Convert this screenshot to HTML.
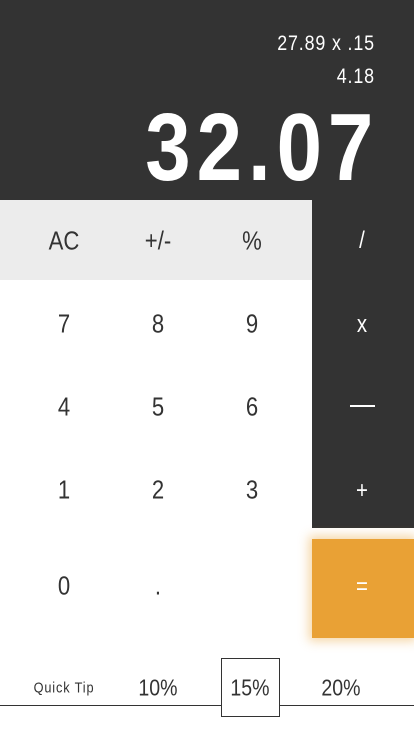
<!DOCTYPE html>
<html><head><meta charset="utf-8"><style>
*{margin:0;padding:0;box-sizing:border-box}
body{width:414px;height:736px;background:#fff;font-family:"Liberation Sans",sans-serif;position:relative;overflow:hidden;color:#333}
.a{position:absolute}
.c{position:absolute;transform:translate(-50%,-50%) scaleX(0.85);white-space:nowrap}
.r{position:absolute;transform-origin:right center;color:#fff;white-space:nowrap}
</style></head><body>
<div class="a" style="left:0;top:0;width:414px;height:200px;background:#333"></div>
<div class="r" style="top:31px;font-size:21px;line-height:26px;right:39px;letter-spacing:1px;transform:scaleX(0.85)">27.89 x .15</div>
<div class="r" style="top:64px;font-size:21px;line-height:26px;right:39px;letter-spacing:1px;transform:scaleX(0.85)">4.18</div>
<div class="r" style="top:99px;font-size:96px;line-height:98px;font-weight:bold;letter-spacing:7px;right:35px;transform:scaleX(0.85)">32.07</div>
<div class="a" style="left:0;top:200px;width:312px;height:80px;background:#ececec"></div>
<div class="a" style="left:312px;top:200px;width:102px;height:328px;background:#333"></div>
<div class="a" style="left:312px;top:539px;width:102px;height:99px;background:#e9a135;box-shadow:0 0 10px 3px rgba(233,161,53,0.45)"></div>
<div class="c" style="left:64px;top:241px;font-size:26px">AC</div>
<div class="c" style="left:158px;top:241px;font-size:26px">+/-</div>
<div class="c" style="left:252px;top:241px;font-size:26px">%</div>
<div class="c" style="left:362px;top:241px;font-size:24px;color:#fff">/</div>
<div class="c" style="left:64px;top:324px;font-size:26px">7</div>
<div class="c" style="left:158px;top:324px;font-size:26px">8</div>
<div class="c" style="left:252px;top:324px;font-size:26px">9</div>
<div class="c" style="left:362px;top:325px;font-size:24px;color:#fff">x</div>
<div class="c" style="left:64px;top:407px;font-size:26px">4</div>
<div class="c" style="left:158px;top:407px;font-size:26px">5</div>
<div class="c" style="left:252px;top:407px;font-size:26px">6</div>
<div class="a" style="left:350px;top:405px;width:25px;height:2px;background:#fff"></div>
<div class="c" style="left:64px;top:490px;font-size:26px">1</div>
<div class="c" style="left:158px;top:490px;font-size:26px">2</div>
<div class="c" style="left:252px;top:490px;font-size:26px">3</div>
<div class="c" style="left:362px;top:491px;font-size:24px;color:#fff">+</div>
<div class="c" style="left:64px;top:586px;font-size:26px">0</div>
<div class="c" style="left:158px;top:586px;font-size:26px">.</div>
<div class="c" style="left:362px;top:587px;font-size:24px;color:#fff">=</div>
<div class="a" style="left:0;top:705px;width:414px;height:1px;background:#333"></div>
<div class="a" style="left:221px;top:658px;width:59px;height:59px;border:1px solid #333;background:#fff"></div>
<div class="c" style="left:64px;top:688px;font-size:15px;letter-spacing:1px">Quick Tip</div>
<div class="c" style="left:158px;top:688px;font-size:23px">10%</div>
<div class="c" style="left:250px;top:688px;font-size:23px">15%</div>
<div class="c" style="left:341px;top:688px;font-size:23px">20%</div>
</body></html>
